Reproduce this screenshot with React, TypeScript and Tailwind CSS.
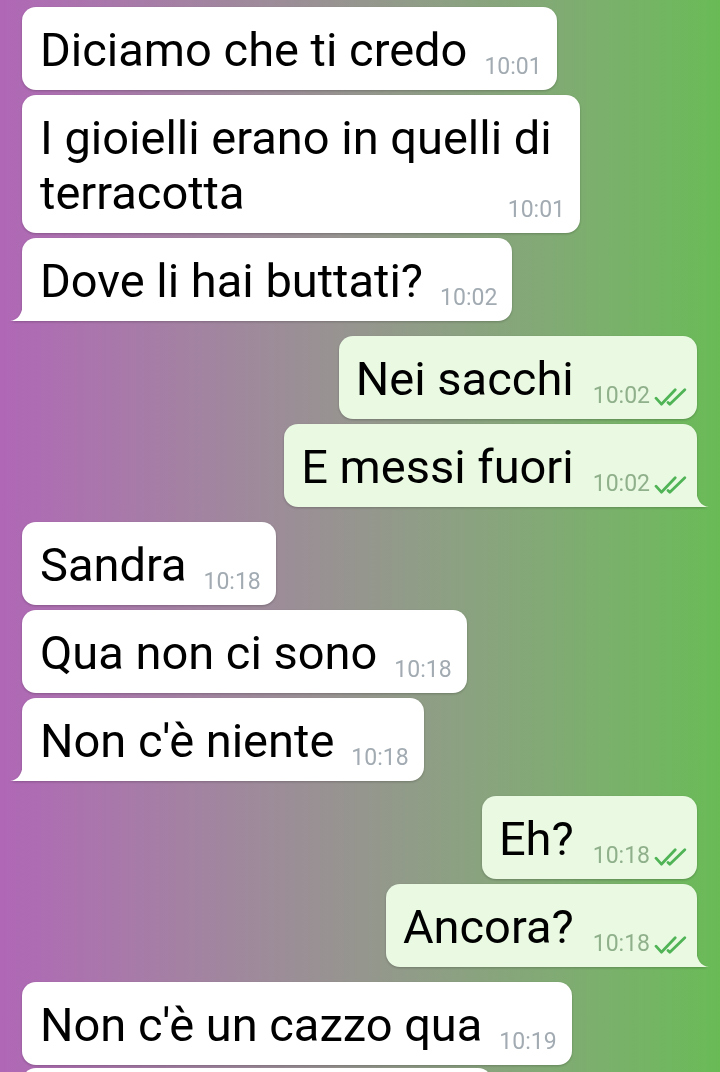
import React from "react";

type Msg = {
  out?: boolean;
  tail?: boolean;
  lines: string[];
  time: string;
  gap: "sm" | "lg";
  width?: string;
};

const messages: Msg[] = [
  { lines: ["Diciamo che ti credo"], time: "10:01", gap: "sm" },
  { lines: ["I gioielli erano in quelli di", "terracotta"], time: "10:01", gap: "sm", width: "w-[558px]" },
  { lines: ["Dove li hai buttati?"], time: "10:02", gap: "sm", tail: true },
  { out: true, lines: ["Nei sacchi"], time: "10:02", gap: "lg" },
  { out: true, lines: ["E messi fuori"], time: "10:02", gap: "sm", tail: true },
  { lines: ["Sandra"], time: "10:18", gap: "lg" },
  { lines: ["Qua non ci sono"], time: "10:18", gap: "sm" },
  { lines: ["Non c'è niente"], time: "10:18", gap: "sm", tail: true },
  { out: true, lines: ["Eh?"], time: "10:18", gap: "lg" },
  { out: true, lines: ["Ancora?"], time: "10:18", gap: "sm", tail: true },
  { lines: ["Non c'è un cazzo qua"], time: "10:19", gap: "lg" },
];

function Ticks() {
  return (
    <svg width="34" height="18" viewBox="0 0 28 15" fill="none" className="ml-[4px] mb-[1px] shrink-0">
      <path d="M1.5 8.5 L6 13.5 L17.5 1.5" stroke="#50b456" strokeWidth="2.3" strokeLinecap="round" strokeLinejoin="round" />
      <path d="M11.5 12 L13 13.5 L25.5 1.5" stroke="#50b456" strokeWidth="2.3" strokeLinecap="round" strokeLinejoin="round" />
    </svg>
  );
}

function Tail({ out }: { out?: boolean }) {
  return (
    <svg
      width="13"
      height="20"
      viewBox="0 0 13 20"
      className={out ? "absolute bottom-0 right-[-12px]" : "absolute bottom-0 left-[-12px]"}
    >
      {out ? (
        <path d="M0 0 C0 13 5 19 13 20 L0 20 Z" fill="#e9f9e2" />
      ) : (
        <path d="M13 0 C13 13 8 19 0 20 L13 20 Z" fill="#ffffff" />
      )}
    </svg>
  );
}

function Bubble({ m }: { m: Msg }) {
  const last = m.lines[m.lines.length - 1];
  const first = m.lines.slice(0, -1);
  return (
    <div
      className={
        "flex drop-shadow-[0_1px_1px_rgba(0,0,0,0.22)] " +
        (m.out ? "justify-end pr-[23px] " : "justify-start pl-[22px] ") +
        (m.gap === "lg" ? "mt-[15px]" : "mt-[5px]")
      }
    >
      <div
        className={
          "relative rounded-[14px] pt-[15px] pb-[13px] " +
          (m.out ? "bg-[#e9f9e2] pl-[17px] pr-[9px] " : "bg-white pl-[18px] pr-[15px] ") +
          (m.tail ? (m.out ? "rounded-br-none " : "rounded-bl-none ") : "") +
          (m.width ?? "")
        }
      >
        {first.map((l) => (
          <div key={l} className="text-[47px] leading-[55px] text-black whitespace-nowrap">
            {l}
          </div>
        ))}
        <div className="flex items-end justify-between">
          <span className="text-[47px] leading-[55px] text-black whitespace-nowrap">{last}</span>
          <span className={"flex items-end translate-y-[1px] " + (m.out ? "ml-[19px]" : "ml-[17px]")}>
            <span className={"text-[23px] leading-[22px] " + (m.out ? "text-[#8fb08a]" : "text-[#a2abb2]")}>
              {m.time}
            </span>
            {m.out && <Ticks />}
          </span>
        </div>
        {m.tail && <Tail out={m.out} />}
      </div>
    </div>
  );
}

export default function App() {
  return (
    <div
      className="h-[1072px] w-[720px] overflow-hidden bg-gradient-to-r from-[#b067b6] to-[#69bb56] pt-[2px]"
      style={{ fontFamily: "Roboto, 'Liberation Sans', sans-serif" }}
    >
      {messages.map((m, i) => (
        <Bubble key={i} m={m} />
      ))}
      {/* next message, only its top edge is on screen */}
      <div className="flex pl-[22px] mt-[3px] drop-shadow-[0_1px_1px_rgba(0,0,0,0.22)]">
        <div className="h-[83px] w-[470px] rounded-[14px] bg-white" />
      </div>
    </div>
  );
}
